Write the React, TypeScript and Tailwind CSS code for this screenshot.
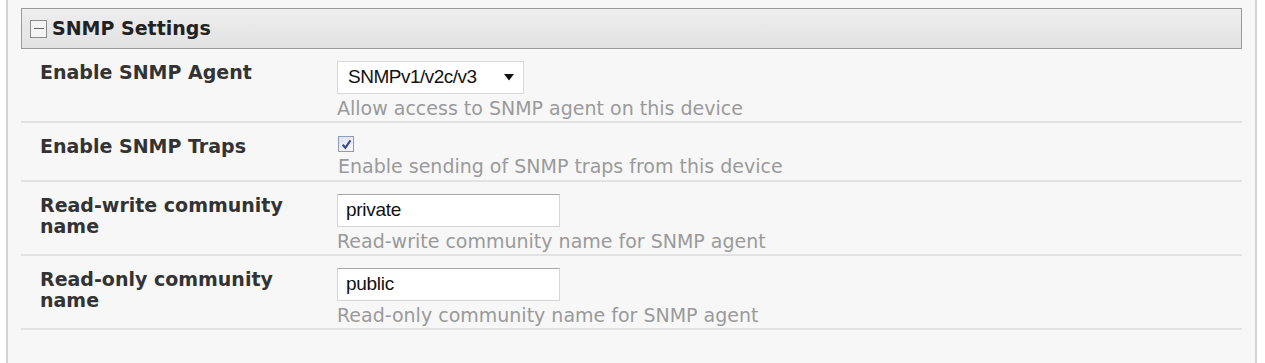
import React from 'react';

const rows = [
  { label: 'Enable SNMP Agent', kind: 'select', value: 'SNMPv1/v2c/v3', help: 'Allow access to SNMP agent on this device' },
  { label: 'Enable SNMP Traps', kind: 'check', value: '', help: 'Enable sending of SNMP traps from this device' },
  { label: 'Read-write community name', kind: 'text', value: 'private', help: 'Read-write community name for SNMP agent' },
  { label: 'Read-only community name', kind: 'text', value: 'public', help: 'Read-only community name for SNMP agent' },
];

function Field({ kind, value }: { kind: string; value: string }) {
  if (kind === 'select') {
    return (
      <div className="flex h-[33px] w-[187px] items-center justify-between border border-[#d9d9d9] bg-white pl-[10px] pr-[9px] font-['Liberation_Sans',sans-serif] text-[19px] tracking-[-0.5px] text-[#111]">
        <span>{value}</span>
        <svg width="10" height="7" viewBox="0 0 10 7">
          <path d="M0 0h10L5 6.5z" fill="#111" />
        </svg>
      </div>
    );
  }
  if (kind === 'check') {
    return (
      <div className="mb-[1px] flex h-[16px] w-[16px] items-center justify-center border border-[#8e9cb8] bg-gradient-to-br from-[#dde1ec] to-[#f7f8fb]">
        <svg width="11" height="11" viewBox="0 0 10 10">
          <path d="M1.5 5.2 L4 8 L8.6 1.3" fill="none" stroke="#3c4a8c" strokeWidth="2" />
        </svg>
      </div>
    );
  }
  return (
    <div className="flex h-[33px] w-[223px] items-center border border-[#d6d6d6] border-t-[#a8a8a8] bg-white pl-[8px] font-['Liberation_Sans',sans-serif] text-[19px] tracking-[-0.3px] text-[#111]">
      {value}
    </div>
  );
}

export default function App() {
  return (
    <div className="h-[363px] w-[1265px] overflow-hidden bg-white font-['DejaVu_Sans',Verdana,sans-serif]">
      <div className="ml-[6px] h-full w-[1251px] border-x-2 border-[#d4d4d4] bg-[#f7f7f7] px-[13px] pt-[8px]">
        <div className="flex h-[41px] items-center border border-[#9a9a9a] bg-gradient-to-b from-[#eeeeee] to-[#e2e2e2] pl-[8px]">
          <div className="flex h-[18px] w-[17px] items-center justify-center border border-[#8c8c8c] bg-[#f4f4f4]">
            <div className="h-[1px] w-[10px] bg-[#666]" />
          </div>
          <span className="ml-[5px] text-[19px] font-bold text-[#222]">SNMP Settings</span>
        </div>

        {rows.map((r) => (
          <div key={r.label} className="flex border-b-2 border-[#e2e2e2] pl-[19px]">
            <div className="w-[297px] pr-[20px] pt-[13px] text-[19px] font-bold leading-[21px] text-[#333]">{r.label}</div>
            <div className={r.kind === 'check' ? 'pt-[13px] pb-[3px] pl-[1px]' : 'pt-[12px] pb-[2px]'}>
              <Field kind={r.kind} value={r.value} />
              <div className="mt-[4px] text-[19px] leading-[21px] text-[#9a9a9a]">{r.help}</div>
            </div>
          </div>
        ))}
      </div>
    </div>
  );
}
